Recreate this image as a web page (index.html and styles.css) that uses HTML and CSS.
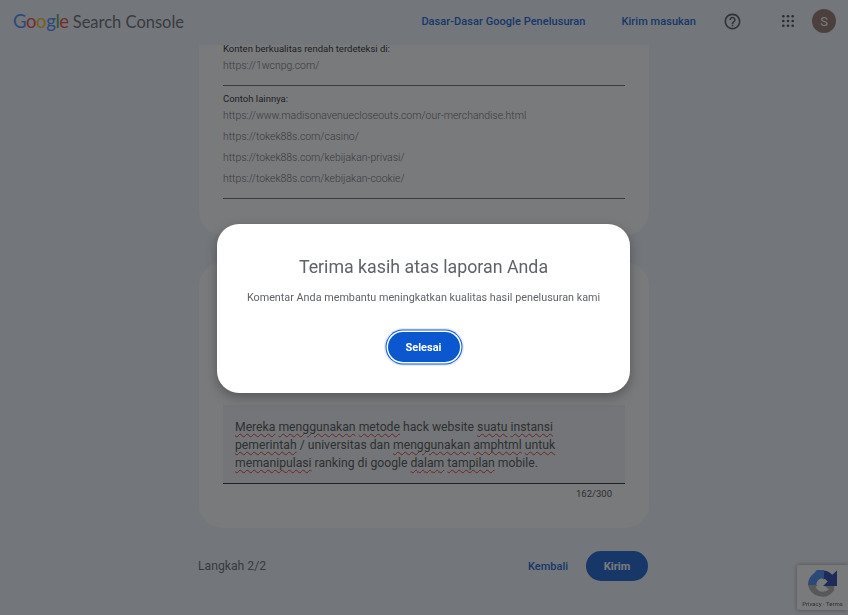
FILE: index.html
```html
<!DOCTYPE html>
<html lang="id">
<head>
    <meta charset="UTF-8">
    <meta name="viewport" content="width=device-width, initial-scale=1.0">
    <title>Google Search Console</title>
    <link rel="stylesheet" href="styles.css">
</head>
<body>
<header class="topbar">
    <div class="logo">
        <span class="logo-google"><span class="g-blue">G</span><span class="g-red">o</span><span class="g-yellow">o</span><span class="g-blue">g</span><span class="g-green">l</span><span class="g-red">e</span></span>
        <span class="logo-product">Search Console</span>
    </div>
    <nav class="topbar-links">
        <a class="top-link">Dasar-Dasar Google Penelusuran</a>
        <a class="top-link">Kirim masukan</a>
    </nav>
    <svg class="help-icon" width="19" height="19" viewBox="0 0 24 24" fill="#4a4d50">
        <path d="M11 18h2v-2h-2v2zm1-16C6.48 2 2 6.48 2 12s4.48 10 10 10 10-4.48 10-10S17.52 2 12 2zm0 18c-4.41 0-8-3.59-8-8s3.59-8 8-8 8 3.59 8 8-3.59 8-8 8zm0-14c-2.21 0-4 1.79-4 4h2c0-1.1.9-2 2-2s2 .9 2 2c0 2-3 1.75-3 5h2c0-2.25 3-2.5 3-5 0-2.21-1.79-4-4-4z"/>
    </svg>
    <svg class="apps-icon" width="12" height="12" viewBox="0 0 12 12" fill="#3c4043">
        <circle cx="1.3" cy="1.3" r="1.3"/><circle cx="6" cy="1.3" r="1.3"/><circle cx="10.7" cy="1.3" r="1.3"/>
        <circle cx="1.3" cy="6" r="1.3"/><circle cx="6" cy="6" r="1.3"/><circle cx="10.7" cy="6" r="1.3"/>
        <circle cx="1.3" cy="10.7" r="1.3"/><circle cx="6" cy="10.7" r="1.3"/><circle cx="10.7" cy="10.7" r="1.3"/>
    </svg>
    <div class="avatar">S</div>
</header>

<main class="content">
    <section class="card card-urls">
        <p class="url-label url-label-first">Konten berkualitas rendah terdeteksi di:</p>
        <p class="url-item">https://1wcnpg.com/</p>
        <div class="url-divider"></div>
        <p class="url-label url-label-next">Contoh lainnya:</p>
        <p class="url-item">https://www.madisonavenuecloseouts.com/our-merchandise.html</p>
        <p class="url-item">https://tokek88s.com/casino/</p>
        <p class="url-item">https://tokek88s.com/kebijakan-privasi/</p>
        <p class="url-item">https://tokek88s.com/kebijakan-cookie/</p>
        <div class="url-divider"></div>
    </section>

    <section class="card card-comment">
        <div class="comment-box">
            <span class="spell">Mereka</span> <span class="spell">menggunakan</span> <span class="spell">metode</span> hack website <span class="spell">suatu</span> <span class="spell">instansi</span><br>
            <span class="spell">pemerintah</span> / universitas dan <span class="spell">menggunakan</span> <span class="spell">amphtml</span> <span class="spell">untuk</span><br>
            <span class="spell">memanipulasi</span> ranking di google <span class="spell">dalam</span> <span class="spell">tampilan</span> mobile.
        </div>
        <div class="comment-count">162/300</div>
    </section>

    <div class="steps">
        <span class="step-label">Langkah 2/2</span>
        <a class="back-link">Kembali</a>
        <button class="send-btn">Kirim</button>
    </div>
</main>

<div class="recaptcha">
    <svg class="recaptcha-logo" width="29" height="29" viewBox="0 0 28 28">
        <path fill="#ababab" d="M0 14.5H9.5L7.5 16.5A7.5 7.5 0 0 0 20 18.5L15.5 15H25.5L25 20A14 14 0 0 1 0 14.5Z"/>
        <path fill="#1c3aa9" d="M14 0.5A14 14 0 0 1 23.5 4.5L28 0.5V15.5H14.5L19 11A7 7 0 0 0 14 8Z"/>
        <path fill="#4285f4" d="M0 14.5A14 14 0 0 1 6 3L8.5 0H15.5V9.5L13.5 8A7 7 0 0 0 8 14.5Z"/>
    </svg>
    <div class="recaptcha-text">Privacy · Terms</div>
</div>

<div class="scrim">
    <div class="dialog">
        <h2 class="dialog-title">Terima kasih atas laporan Anda</h2>
        <p class="dialog-text">Komentar Anda membantu meningkatkan kualitas hasil penelusuran kami</p>
        <button class="done-btn">Selesai</button>
    </div>
</div>
</body>
</html>
```

FILE: styles.css
```css
* {
    box-sizing: border-box;
}

html, body {
    height: 100%;
}

body {
    margin: 0;
    overflow: hidden;
    background: #f0f4f9;
    font-family: Roboto, "Liberation Sans", sans-serif;
    color: #202124;
}

p {
    margin: 0;
}

.topbar {
    display: flex;
    align-items: center;
    height: 45px;
    padding: 0 12px 3px 13px;
}

.logo {
    display: flex;
    align-items: baseline;
    gap: 4px;
    font-family: Lato, sans-serif;
}

.logo-google {
    font-size: 18.5px;
    letter-spacing: -0.4px;
}

.logo-product {
    color: #5f6368;
    font-size: 16.5px;
}

.g-blue { color: #4285f4; }
.g-red { color: #ea4335; }
.g-yellow { color: #fbbc05; }
.g-green { color: #34a853; }

.topbar-links {
    display: flex;
    gap: 36px;
    margin-left: auto;
}

.top-link {
    font-size: 11px;
    font-weight: 500;
    letter-spacing: 0.05px;
    color: #0b57d0;
}

.help-icon {
    margin-left: 27px;
}

.apps-icon {
    margin-left: 40px;
}

.avatar {
    display: flex;
    align-items: center;
    justify-content: center;
    width: 24px;
    height: 24px;
    margin-left: 18px;
    border-radius: 50%;
    background: #8d6e63;
    color: #fff;
    font-size: 13px;
}

.content {
    width: 450px;
    margin-left: 199px;
}

.card {
    background: #fff;
    padding: 0 24px;
}

.card-urls {
    display: flow-root;
    height: 190px;
    border-radius: 0 0 24px 24px;
}

.url-label {
    font-size: 9.5px;
    line-height: 12px;
}

.url-label-first {
    margin-top: -2px;
}

.url-label-next {
    margin-top: 7px;
}

.url-item {
    margin-top: 3px;
    font-size: 10.45px;
    font-weight: 300;
    line-height: 18px;
    color: #5f6368;
}

.url-label + .url-item {
    margin-top: 2px;
}

.url-divider {
    height: 1px;
    margin-top: 10px;
    background: #5f6368;
}

.card-comment {
    height: 266px;
    margin-top: 27px;
    padding-top: 143px;
    border-radius: 24px;
}

.comment-box {
    height: 79px;
    padding: 13px 12px 0;
    background: #f1f3f4;
    border-bottom: 1px solid #202124;
    font-size: 12.2px;
    line-height: 18px;
    color: #444746;
}

.spell {
    text-decoration: underline wavy #d93025 1px;
    text-underline-offset: 2px;
}

.comment-count {
    margin-top: 3px;
    padding-right: 13px;
    text-align: right;
    font-size: 9.5px;
    line-height: 13px;
    color: #3c4043;
}

.steps {
    display: flex;
    align-items: center;
    margin: 23px 1px 0 -1px;
}

.step-label {
    font-size: 12.2px;
    color: #5f6368;
}

.back-link {
    margin-left: auto;
    font-size: 11px;
    font-weight: 500;
    color: #0b57d0;
}

.send-btn {
    width: 62px;
    height: 30px;
    margin-left: 18px;
    border: none;
    border-radius: 15px;
    background: #0b57d0;
    color: #fff;
    font-family: Roboto, sans-serif;
    font-size: 11px;
    font-weight: 700;
}

.recaptcha {
    position: fixed;
    right: 0;
    bottom: 5px;
    width: 51px;
    height: 45px;
    background: #fff;
    box-shadow: 0 0 4px rgba(0, 0, 0, 0.4);
    border-radius: 2px 0 0 2px;
    text-align: center;
}

.recaptcha-logo {
    display: block;
    margin: 5px 0 0 11px;
}

.recaptcha-text {
    margin-top: 1px;
    font-size: 6px;
    line-height: 8px;
    white-space: nowrap;
    color: #444;
}

.scrim {
    position: fixed;
    inset: 0;
    display: flex;
    align-items: center;
    justify-content: center;
    padding: 2px 1px 0 0;
    background: rgba(32, 33, 36, 0.6);
}

.dialog {
    width: 413px;
    height: 169px;
    padding-top: 32px;
    border-radius: 22px;
    background: #fff;
    box-shadow: 0 4px 12px rgba(0, 0, 0, 0.3);
    text-align: center;
}

.dialog-title {
    margin: 0;
    font-size: 17.8px;
    font-weight: 400;
    line-height: 22px;
    color: #5f6368;
}

.dialog-text {
    margin-top: 13px;
    font-size: 10.8px;
    line-height: 14px;
    color: #5f6368;
}

.done-btn {
    display: block;
    width: 72px;
    height: 30px;
    margin: 27px auto 0;
    border: none;
    border-radius: 15px;
    background: #0b57d0;
    box-shadow: 0 0 0 1.5px #fff, 0 0 0 2.5px #0b57d0, 0 0 0 4px rgba(11, 87, 208, 0.12);
    color: #fff;
    font-family: Roboto, sans-serif;
    font-size: 11px;
    font-weight: 700;
}
```
